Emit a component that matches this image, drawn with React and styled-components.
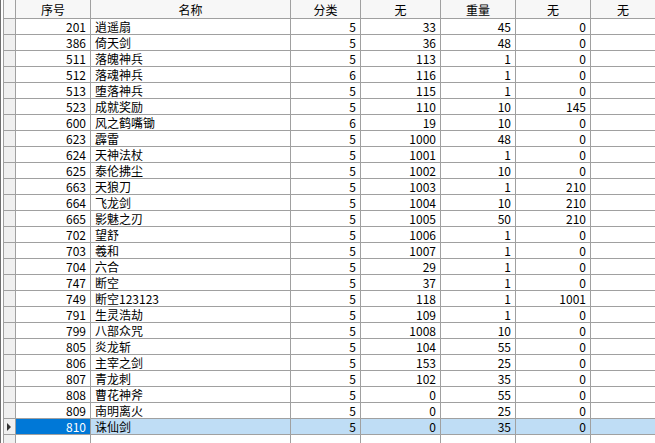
import React from "react";
import styled, { createGlobalStyle } from "styled-components";

const Global = createGlobalStyle`
  body { margin: 0; background: #fff; font-family: "Noto Sans CJK SC", "DejaVu Sans", sans-serif; font-size: 12px; }
`;

const cols = [75, 200, 70, 80, 75, 75, 65];

const rows = [
  [201, "逍遥扇", 5, 33, 45, 0],
  [386, "倚天剑", 5, 36, 48, 0],
  [511, "落魄神兵", 5, 113, 1, 0],
  [512, "落魂神兵", 6, 116, 1, 0],
  [513, "堕落神兵", 5, 115, 1, 0],
  [523, "成就奖励", 5, 110, 10, 145],
  [600, "风之鹤嘴锄", 6, 19, 10, 0],
  [623, "霹雷", 5, 1000, 48, 0],
  [624, "天神法杖", 5, 1001, 1, 0],
  [625, "泰伦拂尘", 5, 1002, 10, 0],
  [663, "天狼刀", 5, 1003, 1, 210],
  [664, "飞龙剑", 5, 1004, 10, 210],
  [665, "影魅之刃", 5, 1005, 50, 210],
  [702, "望舒", 5, 1006, 1, 0],
  [703, "羲和", 5, 1007, 1, 0],
  [704, "六合", 5, 29, 1, 0],
  [747, "断空", 5, 37, 1, 0],
  [749, "断空123123", 5, 118, 1, 1001],
  [791, "生灵浩劫", 5, 109, 1, 0],
  [799, "八部众咒", 5, 1008, 10, 0],
  [805, "炎龙斩", 5, 104, 55, 0],
  [806, "主宰之剑", 5, 153, 25, 0],
  [807, "青龙刺", 5, 102, 35, 0],
  [808, "曹花神斧", 5, 0, 55, 0],
  [809, "南明离火", 5, 0, 25, 0],
  [810, "诛仙剑", 5, 0, 35, 0],
];

const Frame = styled.div`
  width: 655px;
  height: 443px;
  overflow: hidden;
  display: flex;
  border-left: 1px solid #707070;
  box-sizing: border-box;
  padding-left: 2px;
`;

const Grid = styled.div`
  display: grid;
  grid-template-columns: 12px ${cols.map((c) => c + "px").join(" ")};
  grid-auto-rows: 16px;
  grid-template-rows: 19px;
  border-left: 1px solid #a0a0a0;
`;

const Head = styled.div`
  background: #f7f7f7;
  border-right: 1px solid #a0a0a0;
  border-bottom: 1px solid #a0a0a0;
  display: flex;
  align-items: center;
  justify-content: center;
  color: #000;
  white-space: nowrap;
  overflow: hidden;
`;

const RowHead = styled.div`
  background: #f0f0f0;
  border-right: 1px solid #a0a0a0;
  border-bottom: 1px solid #a0a0a0;
  display: flex;
  align-items: center;
  justify-content: center;
`;

const Cell = styled.div`
  border-right: 1px solid #a0a0a0;
  border-bottom: 1px solid #a0a0a0;
  background: ${(p) => (p.$sel ? (p.$focus ? "#0078d7" : "#bfddf5") : "#fff")};
  color: ${(p) => (p.$focus ? "#fff" : "#000")};
  display: flex;
  align-items: center;
  justify-content: ${(p) => (p.$left ? "flex-start" : "flex-end")};
  padding: 0 4px;
  line-height: 1;
  white-space: nowrap;
  overflow: hidden;
`;

const Arrow = () => (
  <svg width="5" height="8" viewBox="0 0 5 8">
    <path d="M0 0 L4 4 L0 8 Z" fill="#333" />
  </svg>
);

const headers = ["序号", "名称", "分类", "无", "重量", "无", "无"];

export default function App() {
  return (
    <>
      <Global />
      <Frame>
        <Grid>
          <Head />
          {headers.map((h, i) => (
            <Head key={i}>{h}</Head>
          ))}
          {rows.map((r, i) => {
            const sel = i === rows.length - 1;
            return (
              <React.Fragment key={r[0]}>
                <RowHead>{sel && <Arrow />}</RowHead>
                {r.map((v, j) => (
                  <Cell key={j} $left={j === 1} $sel={sel} $focus={sel && j === 0}>
                    {v}
                  </Cell>
                ))}
                <Cell $sel={sel} />
              </React.Fragment>
            );
          })}
          <RowHead />
          {cols.map((_, j) => (
            <Cell key={j} />
          ))}
        </Grid>
      </Frame>
    </>
  );
}
